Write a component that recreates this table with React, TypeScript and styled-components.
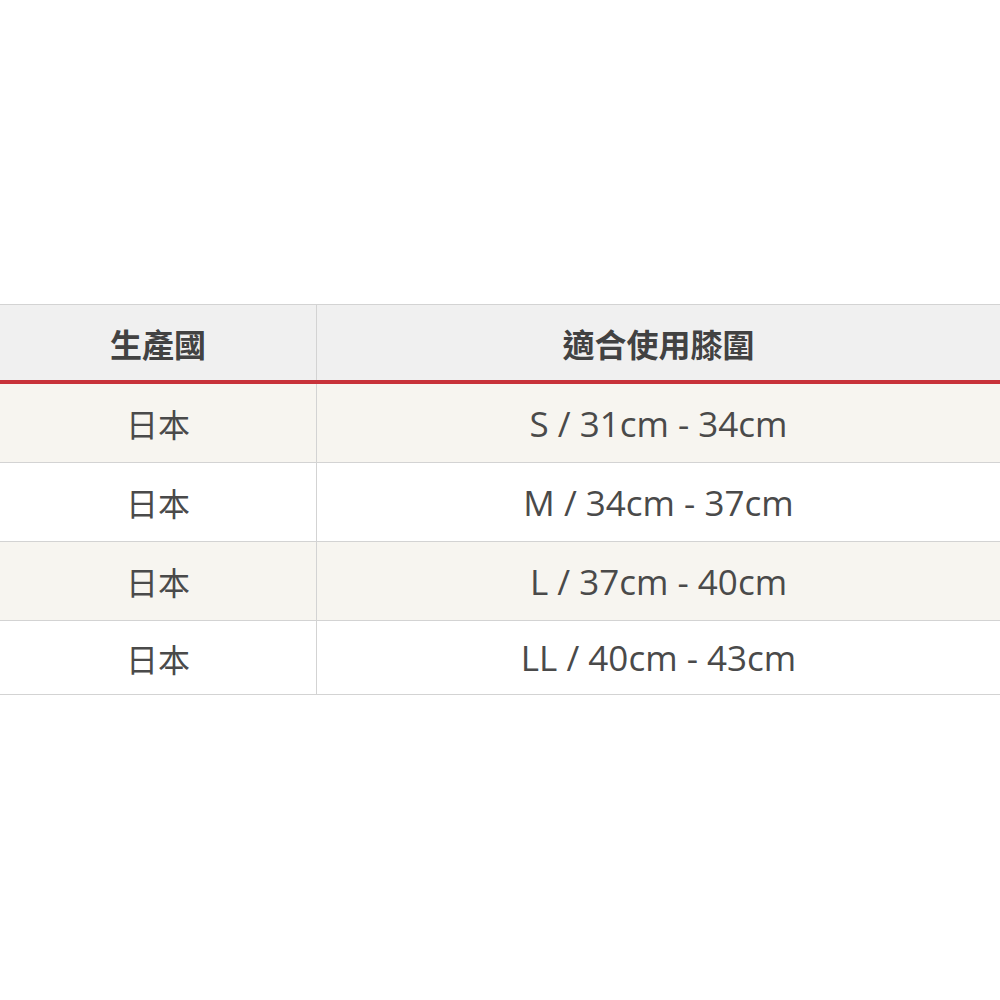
import React from 'react';
import styled, { createGlobalStyle } from 'styled-components';

const GlobalStyle = createGlobalStyle`
    html, body {
        margin: 0;
        padding: 0;
        background: #ffffff;
    }
    body {
        font-family: 'Open Sans', 'Noto Sans CJK TC', sans-serif;
        color: #4a4a4a;
    }
`;

const Page = styled.div`
    width: 1000px;
    height: 1000px;
    overflow: hidden;
    padding-top: 304px;
    box-sizing: border-box;
`;

const Table = styled.table`
    width: 1002px;
    margin-left: -1px;
    border-collapse: collapse;
    table-layout: fixed;
`;

const HeadCell = styled.th`
    height: 75px;
    padding: 0;
    background: #f0f0f0;
    border: 1px solid #d3d3d3;
    border-bottom: 4px solid #c8323a;
    font-family: 'Noto Sans CJK TC', sans-serif;
    font-size: 32px;
    font-weight: 700;
    color: #424242;
    text-align: center;
    vertical-align: middle;
`;

const Row = styled.tr<{ $striped: boolean }>`
    background: ${(p) => (p.$striped ? '#f7f5f0' : '#ffffff')};
`;

const Cell = styled.td<{ $cjk?: boolean; $height: number }>`
    height: ${(p) => p.$height}px;
    padding: 0;
    border: 1px solid #d3d3d3;
    border-top: none;
    text-align: center;
    vertical-align: middle;
    color: #4a4a4a;
    font-family: ${(p) =>
        p.$cjk
            ? "'Noto Sans CJK TC', sans-serif"
            : "'Open Sans', 'Noto Sans CJK TC', sans-serif"};
    font-size: ${(p) => (p.$cjk ? '32px' : '35px')};
    font-weight: 400;
    line-height: 1;
`;

const sizes = [
    'S / 31cm - 34cm',
    'M / 34cm - 37cm',
    'L / 37cm - 40cm',
    'LL / 40cm - 43cm',
];

export default function App() {
    return (
        <>
            <GlobalStyle />
            <Page>
                <Table>
                    <colgroup>
                        <col style={{ width: 317 }} />
                        <col />
                    </colgroup>
                    <thead>
                        <tr>
                            <HeadCell>生產國</HeadCell>
                            <HeadCell>適合使用膝圍</HeadCell>
                        </tr>
                    </thead>
                    <tbody>
                        {sizes.map((size, i) => (
                            <Row key={`size-${i}`} $striped={i % 2 === 0}>
                                <Cell $cjk $height={i === 3 ? 73 : 78}>
                                    日本
                                </Cell>
                                <Cell $height={i === 3 ? 73 : 78}>{size}</Cell>
                            </Row>
                        ))}
                    </tbody>
                </Table>
            </Page>
        </>
    );
}
